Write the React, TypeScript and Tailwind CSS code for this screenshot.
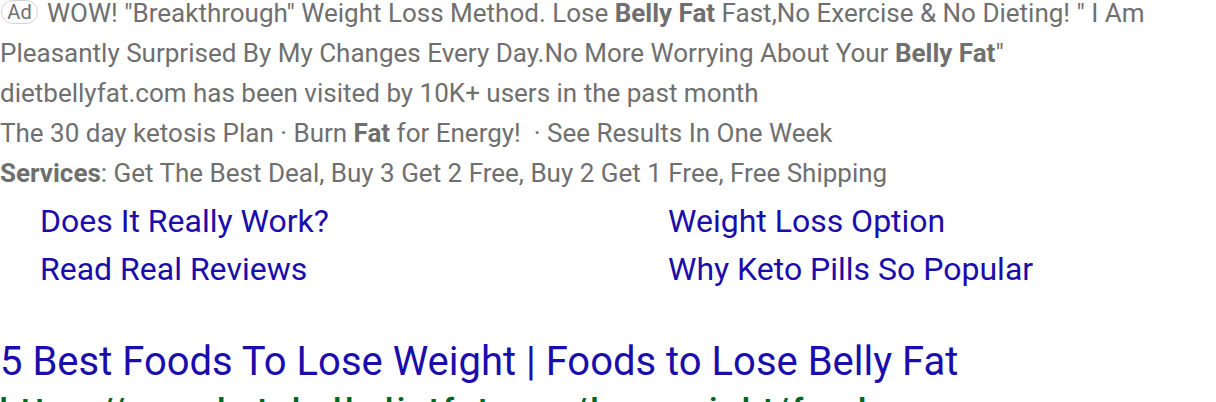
import React from "react";

export default function App() {
  const gray = "text-[#6f6f6f]";
  return (
    <div className="w-[1216px] h-[402px] overflow-hidden bg-white" style={{ fontFamily: "Roboto, 'Noto Sans', sans-serif" }}>
      <div className={`mt-[-7px] text-[26px] leading-[40px] ${gray}`}>
        <p>
          <span className="inline-flex items-center justify-center align-[3px] h-[24px] w-[37px] mr-[9px] ml-[1px] rounded-[12px] border border-[#d4d4d4] text-[20px] leading-none text-[#6f6f6f]">Ad</span>
          WOW! "Breakthrough" Weight Loss Method. Lose <b>Belly Fat</b> Fast,No Exercise &amp; No Dieting! " I Am Pleasantly Surprised By My Changes Every Day.No More Worrying About Your <b>Belly Fat</b>"
        </p>
        <p>dietbellyfat.com has been visited by 10K+ users in the past month</p>
        <p>The 30 day ketosis Plan · Burn <b>Fat</b> for Energy! &nbsp;· See Results In One Week</p>
        <p><b>Services</b>: Get The Best Deal, Buy 3 Get 2 Free, Buy 2 Get 1 Free, Free Shipping</p>
      </div>
      <div className="grid grid-cols-[628px_1fr] pl-[40px] text-[32px] leading-[48px] text-[#1a0dab] mt-[4px]">
        <span>Does It Really Work?</span>
        <span>Weight Loss Option</span>
        <span>Read Real Reviews</span>
        <span>Why Keto Pills So Popular</span>
      </div>
      <div className="mt-[45px] text-[40px] leading-[48px] text-[#1a0dab]">5 Best Foods To Lose Weight | Foods to Lose Belly Fat</div>
      <div className="mt-[3px] text-[30px] leading-[40px] font-bold text-[#006621] tracking-[4px]">https://www.ketobellydietfat.com/loseweight/foods</div>
    </div>
  );
}
